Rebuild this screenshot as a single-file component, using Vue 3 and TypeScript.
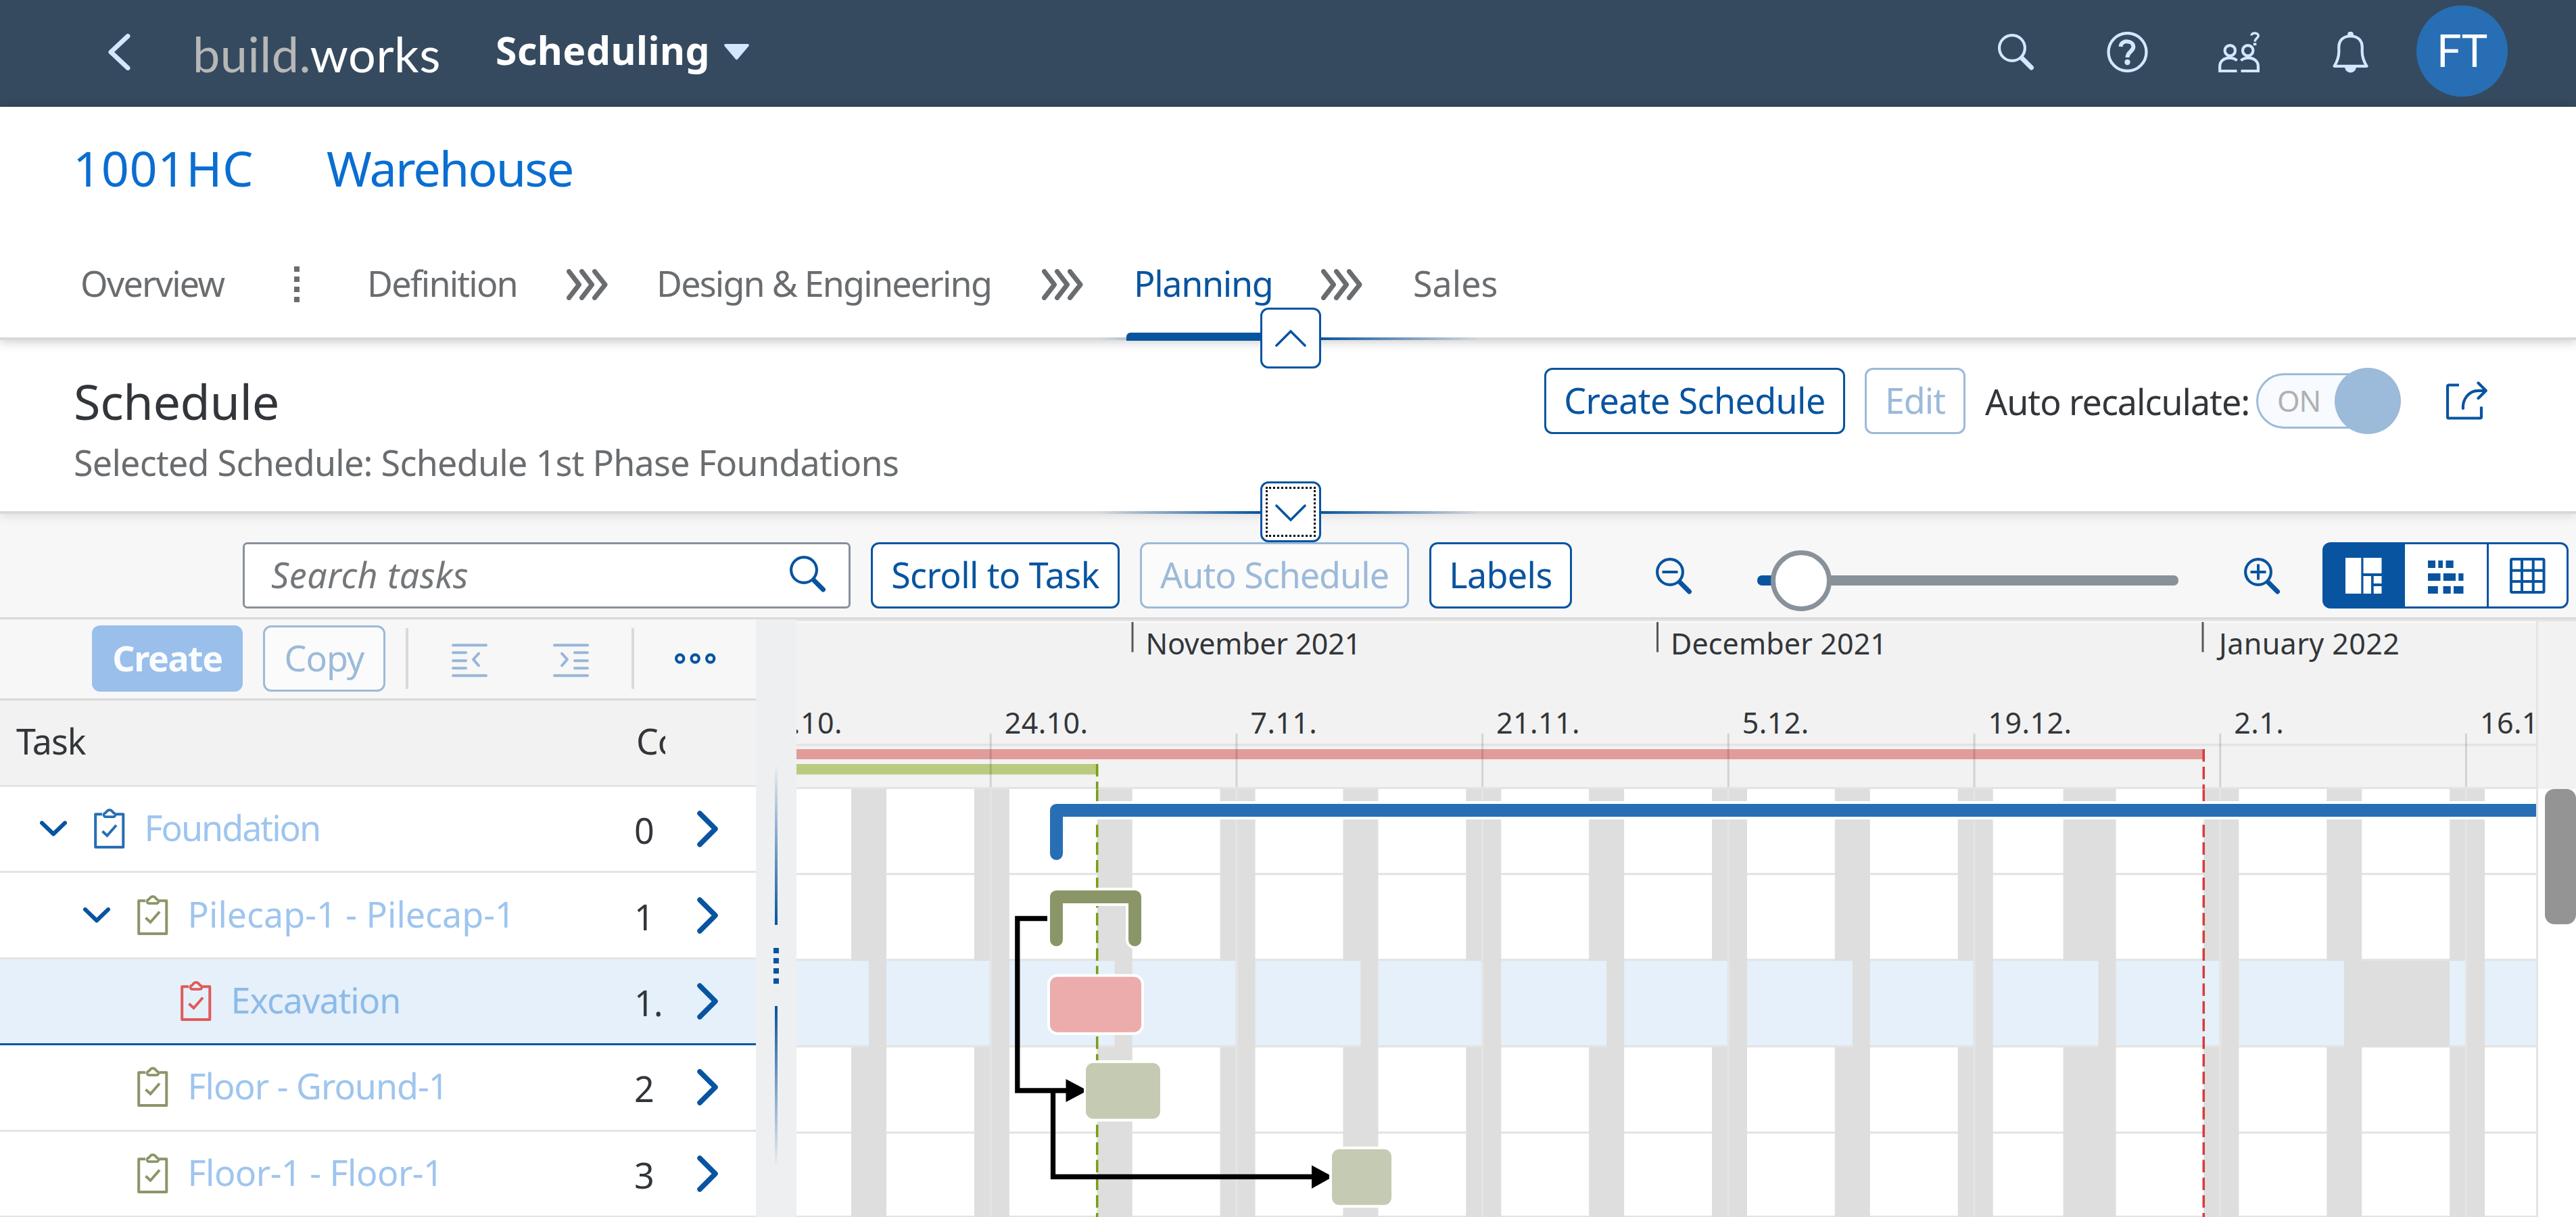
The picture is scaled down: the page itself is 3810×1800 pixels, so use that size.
<script setup lang="ts">
interface Task {
  name: string
  code: string
  level: number
  color: string
  tracking: number
  expandable?: boolean
  selected?: boolean
}

const tasks: Task[] = [
  { name: 'Foundation', code: '0', level: 0, color: '#286eb4', tracking: -2, expandable: true },
  { name: 'Pilecap-1 - Pilecap-1', code: '1', level: 1, color: '#8a9668', tracking: 0, expandable: true },
  { name: 'Excavation', code: '1.', level: 2, color: '#e05a5a', tracking: -1, selected: true },
  { name: 'Floor - Ground-1', code: '2', level: 1, color: '#8a9668', tracking: -1 },
  { name: 'Floor-1 - Floor-1', code: '3', level: 1, color: '#8a9668', tracking: -0.5 },
]

// Time axis: x position of 24 October and width of one day
const axisStart = 1465.2
const day = 25.979

const fortnights = ['10.10.', '24.10.', '7.11.', '21.11.', '5.12.', '19.12.', '2.1.', '16.1.'].map(
  (label, i) => ({ label, x: axisStart + (i - 1) * 14 * day }),
)

const months = [
  { label: 'November 2021', x: 1675, offset: 19.5, tracking: -0.3 },
  { label: 'December 2021', x: 2451.5, offset: 19.5, tracking: 0.1 },
  { label: 'January 2022', x: 3258, offset: 24, tracking: 0.4 },
]

const weekends = Array.from({ length: 14 }, (_, i) => {
  const end = 1311 + i * 7 * day
  const days = i === 10 ? 3 : 2
  return { x: end - days * day, width: days * day, lastDay: end - day }
})

const rowLines = [1291, 1418, 1546, 1673.5, 1798]
</script>

<template>
  <div class="app">
    <svg class="defs" width="0" height="0">
      <symbol id="magnifier" viewBox="0 0 54 54">
        <circle cx="21" cy="21" r="18.9" fill="none" stroke="currentColor" stroke-width="4.2" />
        <path d="M36 36.500L49.500 50" fill="none" stroke="currentColor" stroke-width="7" stroke-linecap="round" />
      </symbol>
      <symbol id="triple" viewBox="0 0 61 46">
        <path d="M3.500 3.500L18.500 23L3.500 42.500M22.500 3.500L37.500 23L22.500 42.500M41.500 3.500L57 23L41.500 42.500" fill="none" stroke="currentColor" stroke-width="7" stroke-linecap="round" stroke-linejoin="round" />
      </symbol>
      <symbol id="clipboard" viewBox="0 0 46 61">
        <path d="M12 9.200H2.200V58H43.300V9.200H33" fill="none" stroke="currentColor" stroke-width="4" stroke-linejoin="round" />
        <path d="M17 13.200H29a3 3 0 0 0 1.500-5.200c-2-.7-2.500-1.500-3.500-3a5 5 0 0 0-8 0c-1 1.500-1.500 2.300-3.500 3A3 3 0 0 0 17 13.200z" fill="none" stroke="currentColor" stroke-width="3.800" />
        <path d="M12.500 34.500L19.500 41L33 25.500" fill="none" stroke="currentColor" stroke-width="4" />
      </symbol>
    </svg>

    <header class="shell">
      <svg class="back" width="33" height="54" viewBox="0 0 33 54"><path d="M29 3.500L4 27L29 50.500" fill="none" stroke="currentColor" stroke-width="7" stroke-linecap="round" stroke-linejoin="round" /></svg>
      <div class="logo"><span>build.</span>works</div>
      <div class="app-title">Scheduling</div>
      <svg class="caret" width="37" height="24" viewBox="0 0 37 24"><path d="M2 0H35a2 2 0 0 1 1.500 3L20 22.500a2 2 0 0 1-3 0L.500 3A2 2 0 0 1 2 0z" fill="currentColor" /></svg>
      <svg class="shell-search" width="54" height="54"><use href="#magnifier" /></svg>
      <svg class="shell-help" width="61" height="60" viewBox="0 0 61 60">
        <circle cx="30.500" cy="30" r="28" fill="none" stroke="currentColor" stroke-width="4.300" />
        <path d="M20.500 22C21 11.500 39.500 12 39.300 22.500C39 29 30.500 30 30.500 38" fill="none" stroke="currentColor" stroke-width="6" />
        <circle cx="30.500" cy="45" r="4.200" fill="currentColor" />
      </svg>
      <svg class="shell-users" width="62" height="61" viewBox="0 0 62 61">
        <g fill="none" stroke="currentColor" stroke-width="4.200">
          <circle cx="17.300" cy="27.800" r="7.700" /><circle cx="43.700" cy="27.800" r="7.700" />
          <path d="M27.500 58H2.200V51C2.200 43 9 38.700 16 38.700c5 0 9 1.200 11.500 4M33.500 58H58.900V51C58.900 43 52 38.700 45 38.700c-5 0-9 1.200-11.500 4" />
          <path d="M49 5.500C49 .500 59.500 1 59.200 6C59 9.500 54 10 54 14.500" stroke-width="3.600" />
        </g>
        <rect x="51.800" y="16.500" width="4.500" height="3.700" fill="currentColor" />
      </svg>
      <svg class="shell-bell" width="53" height="61" viewBox="0 0 53 61">
        <path d="M2.500 50.800C7 44 9.800 36 9.300 26C8.300 12 16 6.500 26.500 6.500S44.700 12 43.700 26C43.200 36 46 44 50.500 50.800Z" fill="none" stroke="currentColor" stroke-width="4.200" stroke-linejoin="round" />
        <path d="M22 7V4a4.500 4.500 0 0 1 9 0V7zM18 52H35a8.500 8.500 0 0 1-17 0z" fill="currentColor" />
      </svg>
      <div class="avatar">FT</div>
    </header>

    <section class="project">
      <div class="project-title"><span class="project-id">1001HC</span><span>Warehouse</span></div>
      <nav class="tabs">
        <a>Overview</a>
        <span class="dots"><i></i><i></i><i></i><i></i></span>
        <a>Definition</a>
        <svg width="61" height="46"><use href="#triple" /></svg>
        <a>Design &amp; Engineering</a>
        <svg width="61" height="46"><use href="#triple" /></svg>
        <a class="active">Planning</a>
        <svg width="61" height="46"><use href="#triple" /></svg>
        <a class="last">Sales</a>
      </nav>
      <div class="glow"></div>
      <button class="fold"><svg width="46" height="26" viewBox="0 0 46 26"><path d="M2 24L23 3L44 24" fill="none" stroke="currentColor" stroke-width="3.600" stroke-linecap="round" /></svg></button>
    </section>

    <section class="page-head">
      <div class="head-row">
        <h1>Schedule</h1>
        <button class="btn create-schedule">Create Schedule</button>
        <button class="btn disabled edit">Edit</button>
        <span class="recalc">Auto recalculate:</span>
        <span class="switch"><span class="switch-track">ON</span><span class="switch-knob"></span></span>
        <svg class="share" width="62" height="58" viewBox="0 0 62 58">
          <g fill="none" stroke="currentColor" stroke-width="4.200">
            <path d="M19 5.500H4a2 2 0 0 0-2 2V52.500a2 2 0 0 0 2 2H50a2 2 0 0 0 2-2V37.500" />
            <path d="M25 40C24 26 34 14 47 13.800H58M47.500 2.500L58.800 13.800L47.500 25" stroke-linecap="round" stroke-linejoin="round" />
          </g>
        </svg>
      </div>
      <p>Selected Schedule: Schedule 1st Phase Foundations</p>
      <div class="glow"></div>
      <button class="fold focused"><svg width="46" height="26" viewBox="0 0 46 26"><path d="M2 2L23 23L44 2" fill="none" stroke="currentColor" stroke-width="3.600" stroke-linecap="round" /></svg></button>
    </section>

    <section class="toolbar">
      <div class="search"><span>Search tasks</span><svg width="54" height="54"><use href="#magnifier" /></svg></div>
      <button class="btn scroll-to">Scroll to Task</button>
      <button class="btn disabled auto">Auto Schedule</button>
      <button class="btn labels">Labels</button>
      <svg class="zoom-out" width="54" height="54" viewBox="0 0 54 54"><use href="#magnifier" /><path d="M9.500 21H32.500" stroke="currentColor" stroke-width="4" /></svg>
      <div class="slider"><div class="slider-knob"></div></div>
      <svg class="zoom-in" width="54" height="54" viewBox="0 0 54 54"><use href="#magnifier" /><path d="M9.500 21H32.500M21 9.500V32.500" stroke="currentColor" stroke-width="4" /></svg>
      <div class="segments">
        <button class="on"><svg width="54" height="53" viewBox="0 0 54 53" fill="currentColor"><path d="M0 0H23.300V53H0zM26.500 0H53.500V23H26.500zM26.500 27H38V53H26.500zM41.700 27H53.500V38H41.700zM41.700 42H53.500V53H41.700z" /></svg></button>
        <button><svg width="53" height="53" viewBox="0 0 53 53" fill="currentColor"><path d="M0 4H11V15H0zM15.300 4H22V15H15.300zM26.500 4H37.700V15H26.500zM0 23H18.500V34H0zM22.800 23H41V34H22.800zM45.200 23H52.500V34H45.200zM0 42H14.800V53H0zM22.500 42H33.700V53H22.500zM38 42H52.500V53H38z" /></svg></button>
        <button><svg width="53" height="53" viewBox="0 0 53 53" fill="none" stroke="currentColor" stroke-width="4"><rect x="2" y="2" width="48.500" height="49" rx="1.500" /><path d="M18 2V51M34.700 2V51M2 18.700H50M2 35H50" /></svg></button>
      </div>
    </section>

    <main class="main">
      <div class="left">
        <div class="left-tools">
          <button class="btn create">Create</button>
          <button class="btn disabled copy">Copy</button>
          <i class="sep"></i>
          <svg class="outdent" width="54" height="50" viewBox="0 0 54 50"><path d="M2 2.200H51M2 13.200H21M2 25.200H21M2 36.200H21M2 47.200H51M40 14.500L32 23.300L40 32.500" fill="none" stroke="currentColor" stroke-width="4" stroke-linecap="round" stroke-linejoin="round" /></svg>
          <svg class="indent" width="54" height="50" viewBox="0 0 54 50"><path d="M2 2.200H51M32 13.200H51M32 25.200H51M32 36.200H51M2 47.200H51M13 14.500L21 23.300L13 32.500" fill="none" stroke="currentColor" stroke-width="4" stroke-linecap="round" stroke-linejoin="round" /></svg>
          <i class="sep"></i>
          <svg class="more" width="61" height="16" viewBox="0 0 61 16"><g fill="none" stroke="currentColor" stroke-width="4.200"><circle cx="7.700" cy="8" r="5.600" /><circle cx="30.200" cy="8" r="5.600" /><circle cx="52.700" cy="8" r="5.600" /></g></svg>
        </div>
        <div class="table-head"><span>Task</span><span class="code-head">Co</span></div>
        <div v-for="t in tasks" :key="t.name" class="row" :class="{ selected: t.selected }">
          <div class="task" :style="{ paddingLeft: 59 + t.level * 64 + 'px' }">
            <span class="expander"><svg v-if="t.expandable" width="40" height="24" viewBox="0 0 40 24"><path d="M3 3.200L20 19.500L37 3.200" fill="none" stroke="currentColor" stroke-width="6" stroke-linecap="round" stroke-linejoin="round" /></svg></span>
            <svg class="clip" width="46" height="61" :style="{ color: t.color }"><use href="#clipboard" /></svg>
            <span class="name" :style="{ letterSpacing: t.tracking + 'px' }">{{ t.name }}</span>
          </div>
          <span class="code">{{ t.code }}</span>
          <svg class="go" width="32" height="54" viewBox="0 0 32 54"><path d="M4 4L27 27L4 50" fill="none" stroke="currentColor" stroke-width="7.500" stroke-linecap="round" stroke-linejoin="round" /></svg>
        </div>
      </div>

      <div class="splitter">
        <div class="split-line top"></div>
        <span class="dots"><i></i><i></i><i></i><i></i></span>
        <div class="split-line bottom"></div>
      </div>

      <svg class="gantt" width="2573" height="884" viewBox="1178 916 2573 884">
        <rect x="1178" y="916" width="2573" height="251" fill="#f2f2f2" />
        <rect x="1178" y="916" width="2573" height="3" fill="#e5e5e5" />
        <rect x="1178" y="919" width="2573" height="1.500" fill="#fff" />
        <rect x="1178" y="1167" width="2573" height="633" fill="#fff" />
        <rect x="1178" y="1421" width="2573" height="125" fill="#e5f0fa" />

        <rect v-for="y in rowLines" :key="y" x="1178" :y="y" width="2573" height="3.300" fill="#e4e4e4" />
        <g fill="#dedede">
          <template v-for="w in weekends" :key="w.x">
            <rect :x="w.x" y="1167" :width="w.width" height="254" />
            <rect :x="w.lastDay" y="1421" :width="day" height="128" />
            <rect :x="w.x" y="1549" :width="w.width" height="251" />
          </template>
          <rect x="3467" y="1421" width="156" height="128" />
        </g>

        <rect x="1178" y="1100" width="2573" height="3.500" fill="#e4e4e4" />
        <rect x="1178" y="1164" width="2573" height="3" fill="#e4e4e4" />
        <rect x="1178" y="1108" width="2082" height="15" fill="#e29b9b" />
        <rect x="1178" y="1130" width="446" height="15.500" fill="#b8cb7f" />

        <g v-for="f in fortnights" :key="f.label">
          <rect :x="f.x - 1.5" y="1085" width="3" height="79" fill="#000" fill-opacity=".13" />
          <rect :x="f.x - 1.5" y="1167" width="3" height="633" fill="#e4e4e4" />
          <text class="day" :x="f.x + 20.500" y="1085">{{ f.label }}</text>
        </g>
        <g v-for="m in months" :key="m.label">
          <rect :x="m.x - 1.5" y="920" width="3" height="44.500" fill="#55585b" />
          <text :x="m.x + m.offset" y="967.700" :style="{ letterSpacing: m.tracking + 'px' }">{{ m.label }}</text>
        </g>

        <g fill="none" stroke-width="3.500" stroke-dasharray="18.5 7.6">
          <path d="M1622.700 1130V1167M1622.700 1167.500V1800" stroke="#7a9e14" />
          <path d="M3259.300 1108V1167M3259.300 1167.500V1800" stroke="#d63c3c" />
        </g>

        <g fill="none" stroke-linecap="round" stroke-linejoin="round">
          <path d="M1562.500 1262V1198.500H3800" stroke="#fff" stroke-width="27" />
          <path d="M1562.500 1262.500V1198.500H3800" stroke="#286eb4" stroke-width="19" />
          <path d="M1562.500 1390V1326.500H1678.500V1390" stroke="#fff" stroke-width="27" />
          <path d="M1562.500 1390V1326.500H1678.500V1390" stroke="#8a9668" stroke-width="19" />
        </g>
        <g stroke="#fff" stroke-width="8" paint-order="stroke">
          <rect x="1553" y="1444.700" width="135" height="82" rx="11" fill="#edacac" />
          <rect x="1606" y="1572.200" width="110" height="82.500" rx="11" fill="#c5cab3" />
          <rect x="1970" y="1699.700" width="88" height="82.500" rx="11" fill="#c5cab3" />
        </g>

        <path d="M1549 1358.500H1504.800V1613H1580M1557.500 1613V1740.500H1942" fill="none" stroke="#000" stroke-width="7.300" />
        <path d="M1576.500 1596L1603 1610V1616L1576.500 1630zM1940 1723.500L1966 1737.500V1743.500L1940 1758z" />
      </svg>

      <div class="scroll"><div class="scroll-head"></div><div class="thumb"></div></div>
    </main>
  </div>
</template>

<style>
body {
  margin: 0;
}
</style>

<style scoped>
.app {
  width: 3810px;
  height: 1800px;
  overflow: hidden;
  display: flex;
  flex-direction: column;
  background: #fff;
  color: #32363a;
  font-family: 'Noto Sans', 'Open Sans', sans-serif;
  font-size: 52px;
  letter-spacing: -1px;
  white-space: nowrap;
}
.app * {
  box-sizing: border-box;
}
svg {
  display: block;
  flex: none;
}
.defs {
  position: absolute;
}

/* Shell bar */
.shell {
  height: 158px;
  flex: none;
  display: flex;
  align-items: center;
  padding: 0 0 4px 160px;
  background: #354a5f;
  color: #d1e8ff;
}
.logo {
  width: 448px;
  margin-left: 92px;
  padding-top: 4px;
  font: 72px/90px Lato, sans-serif;
  letter-spacing: 0.5px;
  color: #fff;
}
.logo span {
  color: #b7b7b7;
}
.app-title {
  width: 338px;
  padding-bottom: 6px;
  font-size: 57px;
  font-weight: 700;
  letter-spacing: 0.5px;
  color: #fff;
}
.shell-search {
  margin-left: 1847px;
}
.shell-help {
  margin-left: 107px;
}
.shell-users {
  margin-left: 104px;
}
.shell-bell {
  margin-left: 107px;
}
.avatar {
  width: 135px;
  height: 135px;
  margin: 0 0 3px 71px;
  border-radius: 50%;
  background: #286eb4;
  color: #fff;
  font: 66px/137px Roboto, sans-serif;
  text-align: center;
}

/* Project header with process tabs */
.project {
  position: relative;
  z-index: 2;
  height: 345px;
  flex: none;
  border-bottom: 4px solid #d9d9d9;
  background: #fff;
  box-shadow: 0 2px 16px rgba(0, 0, 0, 0.22);
}
.project-title {
  display: flex;
  height: 180px;
  padding-left: 108px;
  align-items: center;
  font-size: 72px;
  letter-spacing: -2px;
  color: #0a6ed1;
}
.project-id {
  width: 375px;
  letter-spacing: 0.6px;
}
.tabs {
  display: grid;
  grid-template-columns: 314px 110px 295px 133px 570px 136px 277px 136px auto;
  align-items: center;
  height: 161px;
  padding-left: 119px;
  letter-spacing: -1.8px;
  color: #6a6d70;
}
.tabs svg {
  margin-top: 4px;
}
.tabs .active {
  position: relative;
  letter-spacing: -1.3px;
  color: #0854a0;
}
.tabs .last {
  letter-spacing: 0;
}
.tabs .active::after {
  content: '';
  position: absolute;
  left: -11px;
  top: 109px;
  width: 226px;
  height: 12px;
  border-radius: 6px 6px 0 0;
  background: #0854a0;
}
.dots {
  display: flex;
  flex-direction: column;
  gap: 7px;
}
.dots i {
  width: 8px;
  height: 8px;
  background: currentColor;
}
.tabs .dots {
  padding: 4px 0 0 2px;
}
.glow {
  position: absolute;
  left: 1626px;
  bottom: -4px;
  width: 563px;
  height: 4px;
  background: linear-gradient(90deg, transparent, #0854a0 42%, #0854a0 58%, transparent);
}
.fold {
  position: absolute;
  left: 1864px;
  bottom: -46px;
  width: 90px;
  height: 90px;
  padding: 0;
  display: flex;
  align-items: center;
  justify-content: center;
  border: 3px solid #0854a0;
  border-radius: 12px;
  background: #fff;
  color: #0854a0;
}
.focused svg {
  margin-top: 4px;
}
.focused::after {
  content: '';
  position: absolute;
  inset: 5px;
  border: 3px dotted #000;
}

/* Page header */
.page-head {
  position: relative;
  z-index: 1;
  height: 257px;
  flex: none;
  padding-top: 41px;
  border-bottom: 4px solid #d9d9d9;
  background: #fff;
  box-shadow: 0 2px 16px rgba(0, 0, 0, 0.12);
}
.head-row {
  display: flex;
  align-items: center;
  height: 98px;
  padding-left: 109px;
}
h1 {
  width: 2175px;
  margin: 0;
  font-size: 72px;
  font-weight: 400;
  letter-spacing: -0.4px;
  line-height: 98px;
}
p {
  margin: 12px 0 0 109px;
  line-height: 60px;
  letter-spacing: -0.73px;
  color: #6a6d70;
}
.btn {
  flex: none;
  height: 98px;
  padding: 0 0 3px;
  border: 3px solid #0854a0;
  border-radius: 12px;
  background: #fff;
  color: #0854a0;
  font: inherit;
  letter-spacing: -0.6px;
  text-align: center;
}
.btn.disabled {
  border-color: #9cbad9;
  background: rgba(255, 255, 255, 0.5);
  color: #9cbad9;
  letter-spacing: -1px;
}
.create-schedule {
  width: 445px;
}
.edit {
  width: 149px;
  margin-left: 29px;
}
.recalc {
  width: 401px;
  margin-left: 29px;
}
.switch {
  display: flex;
  align-items: center;
  width: 214px;
}
.switch-track {
  width: 165px;
  height: 82px;
  padding-left: 28px;
  border: 3px solid #9cbad9;
  border-radius: 41px 0 0 41px;
  background: #f7faff;
  color: #b0b0b0;
  font-size: 43px;
  line-height: 75px;
}
.switch-knob {
  width: 98px;
  height: 98px;
  margin-left: -49px;
  border-radius: 50%;
  background: #9cbad9;
}
.share {
  margin-left: 67px;
  color: #0854a0;
}

/* Toolbar */
.toolbar {
  display: flex;
  align-items: flex-start;
  height: 156px;
  flex: none;
  padding: 42px 0 0 359px;
  border-bottom: 3px solid #d9d9d9;
  background: #f7f7f7;
  color: #0854a0;
}
.search {
  display: flex;
  align-items: center;
  justify-content: space-between;
  width: 899px;
  height: 98px;
  padding: 0 33px 4px 39px;
  border: 3px solid #89919a;
  border-radius: 7px;
  background: #fff;
}
.search span {
  font-style: italic;
  letter-spacing: 0.5px;
  color: #74777a;
}
.scroll-to {
  width: 368px;
  margin-left: 30px;
}
.auto {
  width: 398px;
  margin-left: 30px;
}
.labels {
  width: 211px;
  margin-left: 30px;
}
.zoom-out {
  margin: 23px 0 0 124px;
}
.slider {
  width: 623px;
  height: 15px;
  margin: 49px 0 0 96px;
  border-radius: 7px;
  background: linear-gradient(90deg, #0854a0 60px, #89919a 60px);
}
.slider-knob {
  width: 90px;
  height: 90px;
  margin: -37px 0 0 20px;
  border: 7px solid #89919a;
  border-radius: 50%;
  background: #fff;
}
.zoom-in {
  margin: 23px 0 0 97px;
}
.segments {
  display: flex;
  width: 364px;
  height: 98px;
  margin-left: 62px;
}
.segments button {
  display: flex;
  align-items: center;
  justify-content: center;
  width: 121px;
  padding: 0;
  border: solid #0854a0;
  border-width: 3px 0;
  background: #fff;
  color: #0854a0;
}
.segments button:first-child {
  width: 122px;
  border-radius: 12px 0 0 12px;
}
.segments button:last-child {
  border-width: 3px;
  border-radius: 0 12px 12px 0;
}
.segments button.on {
  background: #0854a0;
  color: #fff;
}

/* Task table */
.main {
  display: flex;
  height: 884px;
  flex: none;
}
.left {
  width: 1118px;
  flex: none;
}
.left-tools {
  display: flex;
  align-items: flex-start;
  height: 120px;
  padding: 9px 0 0 136px;
  border-bottom: 3px solid #d9d9d9;
  background: #f7f7f7;
  color: #98b6d7;
}
.create {
  width: 223px;
  border-color: #99bfea;
  background: #99bfea;
  color: #fafcff;
  font-weight: 700;
  letter-spacing: -1.5px;
}
.copy {
  width: 181px;
  margin: 0 30px;
}
.sep {
  width: 4px;
  height: 90px;
  margin-top: 4px;
  background: #d9d9d9;
}
.outdent {
  margin: 27px 0 0 63.5px;
}
.indent {
  margin: 27px 62.5px 0 96px;
}
.more {
  margin: 41px 0 0 60px;
  color: #0854a0;
}
.table-head {
  display: flex;
  align-items: center;
  height: 128px;
  padding-left: 24px;
  border-bottom: 3px solid #e4e4e4;
  background: #f2f2f2;
}
.table-head span {
  width: 917px;
  padding-bottom: 6px;
}
.table-head .code-head {
  width: 43px;
  overflow: hidden;
}
.row {
  display: flex;
  align-items: center;
  height: 127.4px;
  border-bottom: 3px solid #e4e4e4;
  color: #0854a0;
}
.row.selected {
  border-color: #0854a0;
  background: #e5f0fa;
}
.task {
  display: flex;
  align-items: center;
  width: 938px;
}
.expander {
  width: 80px;
}
.clip {
  margin-bottom: 1px;
}
.name {
  margin-left: 28.5px;
  padding-bottom: 5px;
  color: #9fc5ee;
}
.selected .name {
  color: #8dbbe8;
}
.code {
  width: 93px;
  padding-top: 3px;
  color: #32363a;
}

/* Splitter */
.splitter {
  display: flex;
  flex-direction: column;
  align-items: center;
  width: 60px;
  flex: none;
  background: #edeff0;
  color: #0854a0;
}
.split-line {
  width: 4px;
  height: 238px;
}
.top {
  margin: 214px 0 34px;
  background: linear-gradient(transparent, #0854a0);
}
.bottom {
  margin-top: 33px;
  background: linear-gradient(#0854a0, transparent);
}

/* Chart */
.gantt text {
  font-size: 43px;
  letter-spacing: 0;
  fill: #32363a;
}
.gantt .day {
  letter-spacing: 0.4px;
}
.scroll {
  flex: 1;
  border-left: 3px solid #e4e4e4;
}
.scroll-head {
  height: 251px;
  border-top: 3px solid #e4e4e4;
  background: #f2f2f2;
}
.thumb {
  height: 200px;
  margin-left: 10px;
  border-radius: 14px;
  background: #949494;
}
</style>
